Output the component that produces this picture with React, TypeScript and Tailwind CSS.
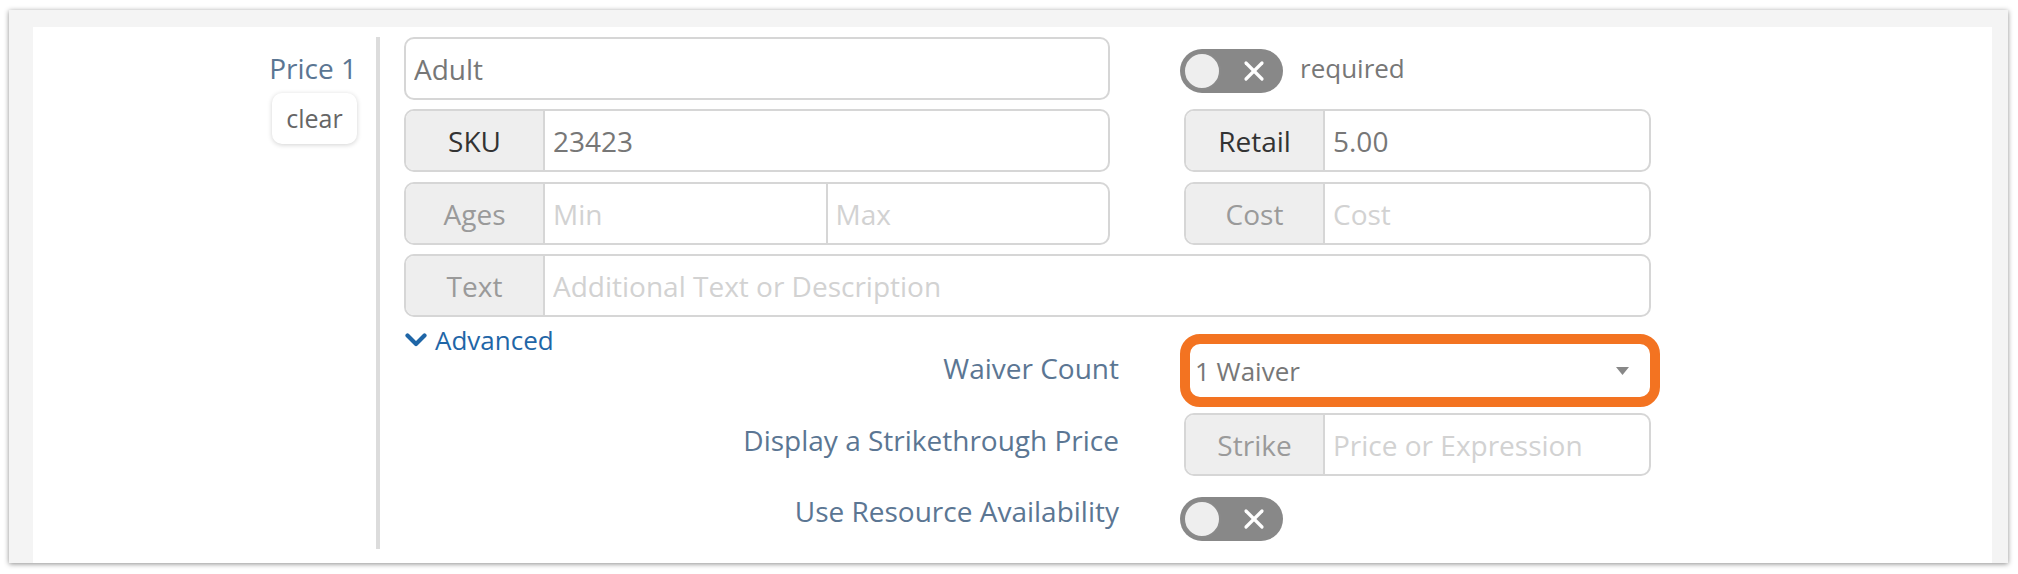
import { X } from "lucide-react";

const labelCls = "text-[28px] leading-[32px] text-[#5b7693] whitespace-nowrap";

function Toggle() {
  return (
    <div className="flex h-[44px] w-[103px] shrink-0 items-center rounded-full bg-[#888888] px-[3px]">
      <div className="h-[38px] w-[38px] rounded-full border-2 border-[#8a8a8a] bg-[#eeeeee]" />
      <X className="ml-[17px] h-[32px] w-[32px] text-white" strokeWidth={2.4} />
    </div>
  );
}

function Field({ value, placeholder, className = "" }: { value?: string; placeholder?: string; className?: string }) {
  return (
    <input
      readOnly
      defaultValue={value}
      placeholder={placeholder}
      className={`min-w-0 flex-1 bg-transparent px-[8px] text-[28px] text-[#777777] outline-none placeholder:text-[#d2d2d2] ${className}`}
    />
  );
}

function Group({
  addon,
  dark = false,
  className = "",
  children,
}: {
  addon: string;
  dark?: boolean;
  className?: string;
  children: React.ReactNode;
}) {
  return (
    <div className={`flex h-[63px] shrink-0 overflow-hidden rounded-[10px] border-2 border-[#d6d6d6] bg-white ${className}`}>
      <div
        className={`flex w-[139px] shrink-0 items-center justify-center border-r-2 border-[#d6d6d6] bg-[#eeeeee] text-[28px] ${
          dark ? "text-[#333333]" : "text-[#9a9a9a]"
        }`}
      >
        {addon}
      </div>
      {children}
    </div>
  );
}

export default function App() {
  return (
    <div className="h-[574px] w-[2018px] bg-white pl-[9px] pt-[10px] font-['Open_Sans',sans-serif]">
      <div className="flex h-[553px] w-[1999px] border-l-[24px] border-r-[16px] border-t-[17px] border-[#f4f4f4] bg-white shadow-[0_1px_5px_rgba(0,0,0,0.45)]">
        {/* Left label column */}
        <div className="flex w-[324px] shrink-0 flex-col items-end pt-[25px]">
          <div className={labelCls}>Price 1</div>
          <button className="mt-[9px] h-[51px] w-[85px] rounded-[10px] bg-white text-[25px] text-[#666666] shadow-[0_1px_5px_rgba(0,0,0,0.18)]">
            clear
          </button>
        </div>

        {/* Divider */}
        <div className="mb-[14px] ml-[19px] mt-[10px] w-[4px] shrink-0 bg-[#dcdcdc]" />

        {/* Form content */}
        <div className="ml-[24px] flex w-[1247px] flex-col pt-[10px]">
          {/* Name + required */}
          <div className="flex items-start">
            <div className="flex h-[63px] w-[706px] shrink-0 items-center rounded-[10px] border-2 border-[#d6d6d6] bg-white">
              <Field value="Adult" />
            </div>
            <div className="ml-[70px] mt-[12px]">
              <Toggle />
            </div>
            <span className="ml-[17px] mt-[15px] text-[26px] leading-[32px] text-[#777777]">required</span>
          </div>

          {/* SKU + Retail */}
          <div className="mt-[9px] flex">
            <Group addon="SKU" dark className="w-[706px]">
              <Field value="23423" />
            </Group>
            <Group addon="Retail" dark className="ml-[74px] w-[467px]">
              <Field value="5.00" />
            </Group>
          </div>

          {/* Ages + Cost */}
          <div className="mt-[10px] flex">
            <Group addon="Ages" className="w-[706px]">
              <Field placeholder="Min" />
              <Field placeholder="Max" className="border-l-2 border-[#d6d6d6]" />
            </Group>
            <Group addon="Cost" className="ml-[74px] w-[467px]">
              <Field placeholder="Cost" />
            </Group>
          </div>

          {/* Text */}
          <div className="mt-[9px] flex">
            <Group addon="Text" className="w-[1247px]">
              <Field placeholder="Additional Text or Description" />
            </Group>
          </div>

          {/* Advanced + Waiver Count */}
          <div className="flex items-start">
            <div className="flex w-[715px] shrink-0 items-start justify-between">
              <div className="ml-[1px] mt-[7px] flex items-center text-[26px] leading-[32px] text-[#1f66a7]">
                <svg width="22" height="16" viewBox="0 0 22 16" fill="none">
                  <path d="M2.5 3.5 L11 12 L19.5 3.5" stroke="#1f66a7" strokeWidth="4.2" strokeLinecap="round" strokeLinejoin="round" />
                </svg>
                <span className="ml-[8px]">Advanced</span>
              </div>
              <div className={`${labelCls} mt-[35px]`}>Waiver Count</div>
            </div>
            <div className="ml-[61px] mt-[17px] flex h-[73px] w-[480px] shrink-0 items-center justify-between rounded-[20px] border-[10px] border-[#f37321] bg-white pl-[5px] pr-[21px]">
              <span className="text-[26px] leading-[32px] text-[#777777]">1 Waiver</span>
              <svg width="13" height="8" viewBox="0 0 13 8">
                <path d="M0 0 H13 L6.5 8 Z" fill="#888888" />
              </svg>
            </div>
          </div>

          {/* Strikethrough */}
          <div className="flex items-start">
            <div className={`${labelCls} mt-[17px] w-[715px] shrink-0 text-right`}>Display a Strikethrough Price</div>
            <Group addon="Strike" className="ml-[65px] mt-[6px] w-[467px]">
              <Field placeholder="Price or Expression" />
            </Group>
          </div>

          {/* Resource availability */}
          <div className="flex items-start">
            <div className={`${labelCls} mt-[19px] w-[715px] shrink-0 text-right`}>Use Resource Availability</div>
            <div className="ml-[61px] mt-[21px]">
              <Toggle />
            </div>
          </div>
        </div>
      </div>
    </div>
  );
}
